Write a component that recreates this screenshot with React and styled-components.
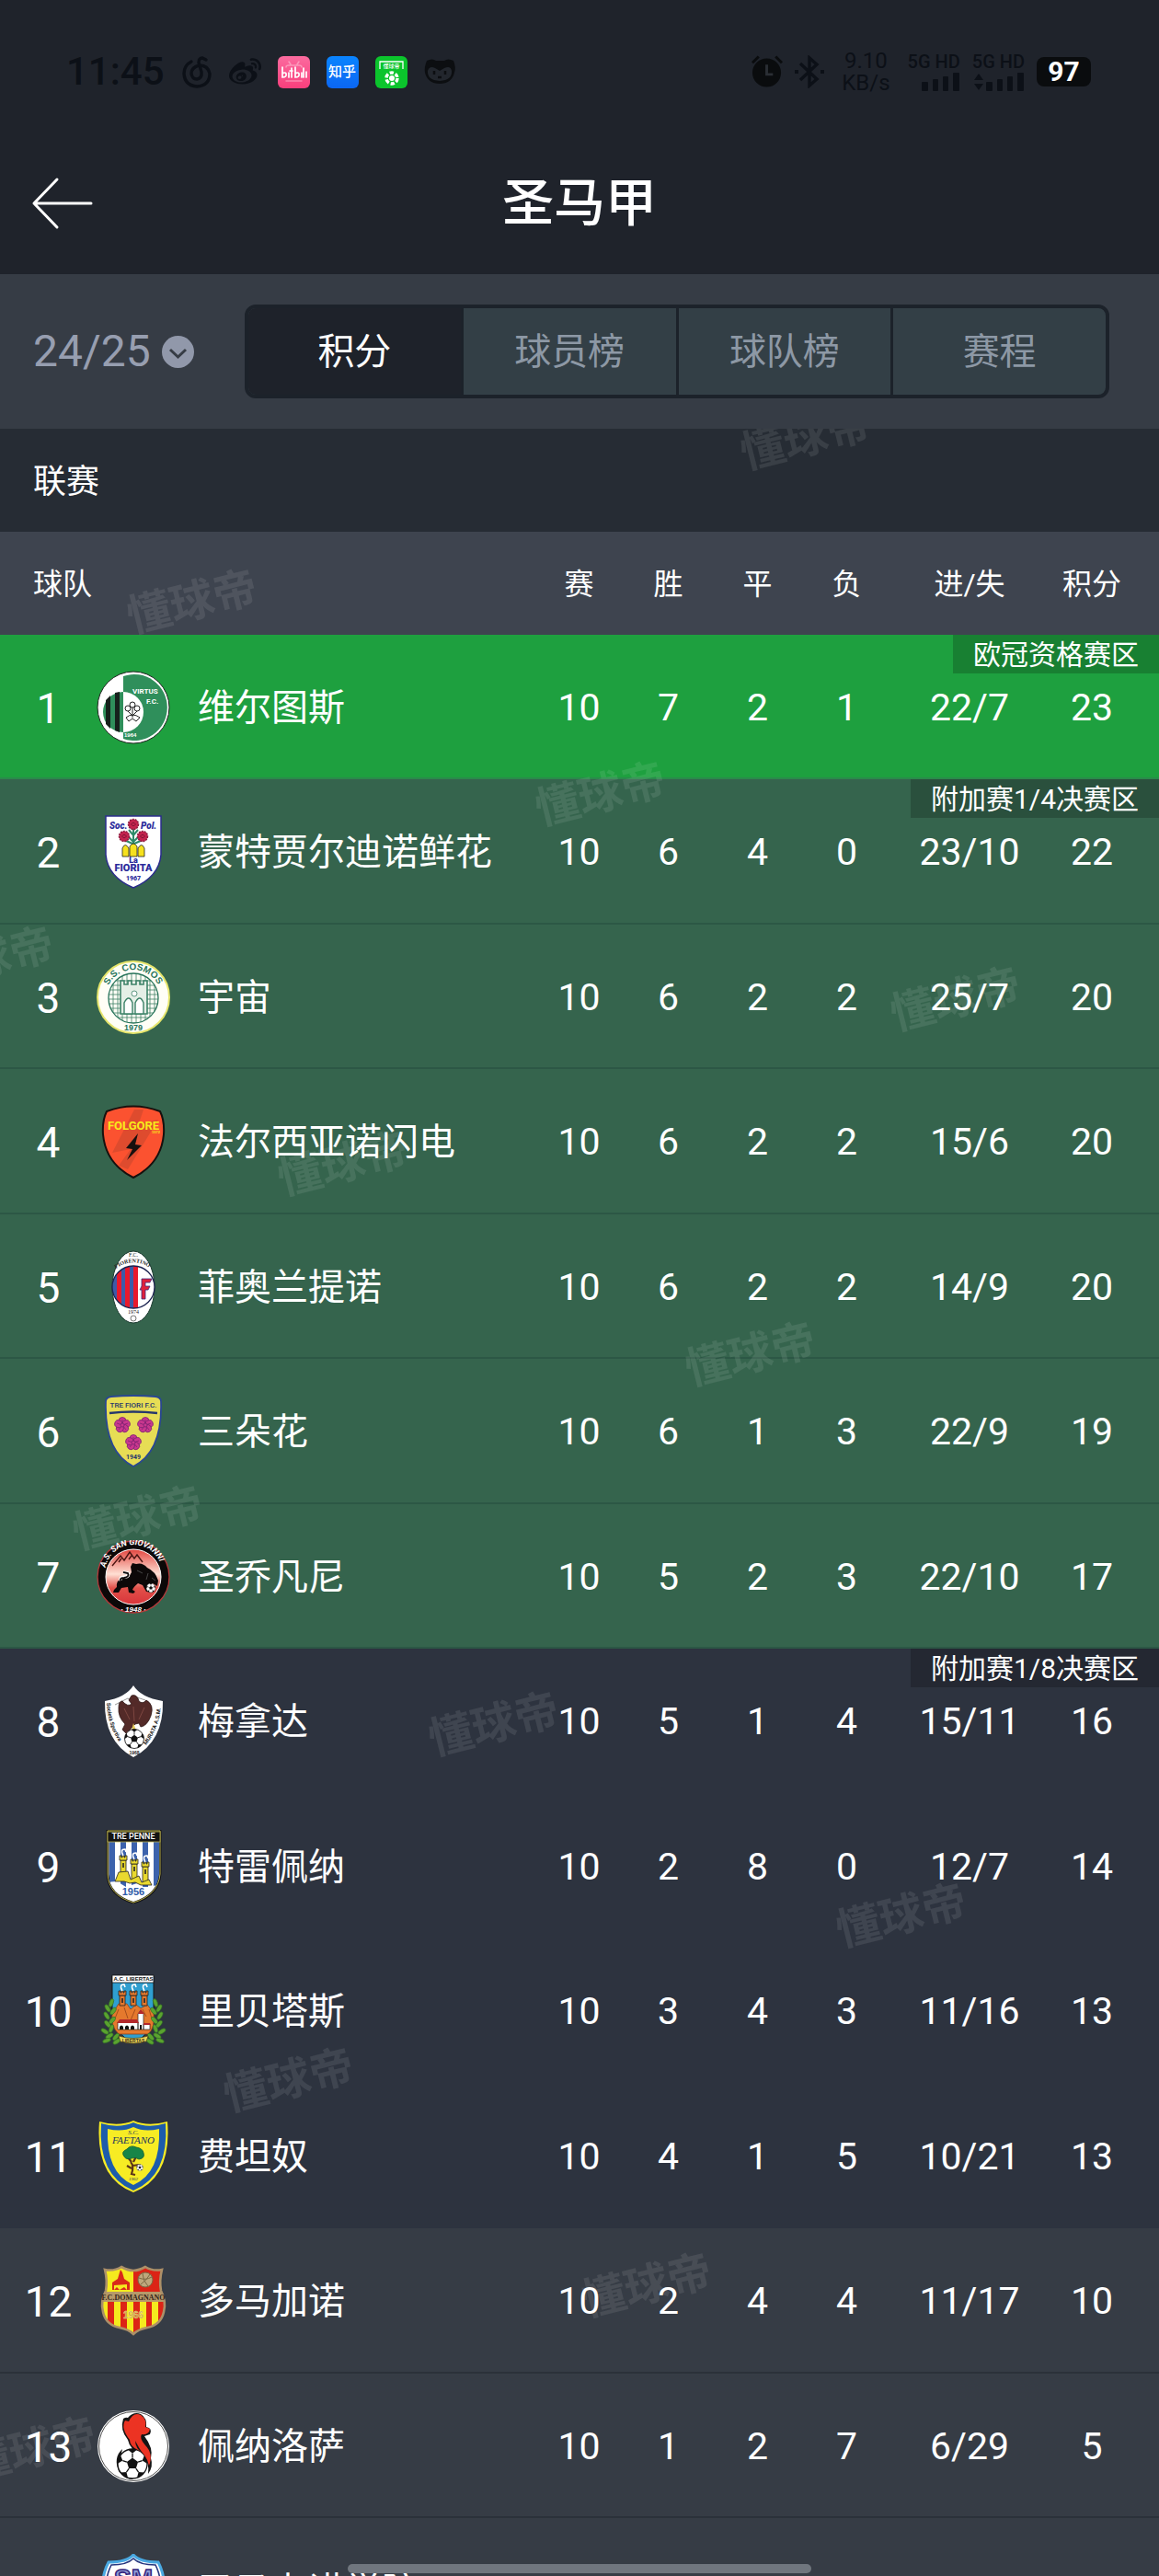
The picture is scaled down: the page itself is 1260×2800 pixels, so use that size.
import { useState } from 'react';
import styled, { createGlobalStyle, css } from 'styled-components';
import { FaWeibo } from 'react-icons/fa';

const GlobalStyle = createGlobalStyle`
  * {
    box-sizing: border-box;
  }
  body {
    margin: 0;
    background: #363c45;
    color: #fff;
    font-family: Roboto, 'Noto Sans CJK SC', sans-serif;
  }
  button, select {
    margin: 0;
    padding: 0;
    border: 0;
    background: none;
    color: inherit;
    font: inherit;
  }
`;

const Screen = styled.div`
  position: relative;
  display: flex;
  flex-direction: column;
  height: 100vh;
  overflow: hidden;
`;

/* status bar */

const StatusBar = styled.div`
  display: flex;
  align-items: center;
  justify-content: space-between;
  height: 144px;
  padding: 12px 74px 0 72px;
  background: #1f232b;
  color: #0c1017;
`;

const StatusGroup = styled.div`
  display: flex;
  align-items: center;
  gap: ${props => props.$gap}px;
`;

const Clock = styled.span`
  font-size: 42px;
  line-height: 48px;
  font-weight: 500;
`;

const AppTile = styled.span`
  display: flex;
  align-items: center;
  justify-content: center;
  width: 35px;
  height: 35px;
  border-radius: 6px;
  background: ${props => props.$bg};
  color: #fff;
  font-size: 15px;
  line-height: 20px;
  font-weight: 500;
`;

const NetSpeed = styled.div`
  display: flex;
  flex-direction: column;
  align-items: center;
  padding: 0 6px;
  font-size: 24px;
  line-height: 24px;
`;

const Signal = styled.div`
  display: flex;
  flex-direction: column;
  align-items: flex-end;
  gap: 2px;
  font-size: 20px;
  line-height: 20px;
  font-weight: 500;
`;

const Battery = styled.span`
  width: 59px;
  height: 32px;
  border-radius: 8px;
  background: #0a0c0e;
  color: #fff;
  font-size: 30px;
  line-height: 32px;
  font-weight: 700;
  text-align: center;
`;

/* title bar and filters */

const TitleBar = styled.header`
  display: grid;
  grid-template-columns: 1fr auto 1fr;
  align-items: center;
  height: 154px;
  padding: 0 34px;
  background: #1f232b;
`;

const BackButton = styled.button`
  display: flex;
  justify-self: start;
`;

const Title = styled.h1`
  margin: 0;
  font-size: 56px;
  line-height: 64px;
  font-weight: 500;
`;

const FilterBar = styled.div`
  display: flex;
  align-items: center;
  height: 168px;
  padding: 0 54px 0 36px;
  background: #363c45;
`;

const Season = styled.label`
  display: flex;
  align-items: center;
  flex: 0 0 230px;
  gap: 12px;
  color: #979eb0;
`;

const SeasonSelect = styled.select`
  appearance: none;
  font-size: 48px;
  line-height: 56px;
`;

const Tabs = styled.nav`
  display: flex;
  flex: 1;
  height: 102px;
  border: 4px solid #1c222a;
  border-radius: 12px;
  overflow: hidden;
  background: #333f46;
`;

const Tab = styled.button`
  flex: 1;
  padding-top: 2px;
  color: #8d98a5;
  font-size: 40px;
  line-height: 48px;

  & + & {
    border-left: 3px solid #1c222a;
  }

  ${props =>
    props.$active &&
    css`
      background: #1e222a;
      color: #fff;
    `}
`;

/* standings */

const Standings = styled.main`
  position: relative;
  flex: 1;
  min-height: 0;
  overflow: hidden;
`;

const SectionTitle = styled.h2`
  display: flex;
  align-items: center;
  height: 112px;
  margin: 0;
  padding: 4px 36px 0;
  background: #262c34;
  font-size: 36px;
  line-height: 48px;
  font-weight: 400;
`;

const Table = styled.table`
  width: 100%;
  border-collapse: collapse;
  table-layout: fixed;
`;

const HeadRow = styled.tr`
  height: 112px;
  background: #3e444f;
`;

const HeadCell = styled.th`
  width: ${props => props.$width};
  padding: ${props => props.$padding || '2px 0 0'};
  font-size: 32px;
  line-height: 40px;
  font-weight: 400;
  text-align: ${props => props.$align || 'center'};
`;

const zones = {
  champions: { bg: '#1ea03f', line: '#2a8a4b' },
  playoff: { bg: '#35644d', line: '#2c5745' },
  qualifier: { bg: '#2d333f', line: '#2d333f' },
  none: { bg: '#363c45', line: '#2b3139' },
};

const TeamRow = styled.tr`
  position: relative;
  height: 157px;
  background: ${props => zones[props.$zone].bg};
  box-shadow: inset 0 -2px ${props => zones[props.$zone].line};

  &:nth-child(even) {
    height: 158px;
  }
`;

const Cell = styled.td`
  padding: ${props => props.$padding || 0};
  font-size: 41px;
  line-height: 48px;
  text-align: center;
`;

const Team = styled.div`
  display: flex;
  align-items: center;
`;

const Rank = styled.span`
  width: 105px;
  padding-top: 2px;
  font-size: 46px;
  line-height: 56px;
  text-align: center;
`;

const TeamName = styled.span`
  margin-left: 30px;
  padding-top: 2px;
  font-size: 40px;
  line-height: 48px;
  white-space: nowrap;
`;

const ZoneBadge = styled.span`
  position: absolute;
  top: 0;
  right: 0;
  height: 42px;
  padding: 0 22px;
  background: rgba(0, 0, 0, 0.2);
  font-size: 30px;
  line-height: 44px;
  white-space: nowrap;
`;

const Watermark = styled.span`
  position: absolute;
  left: ${props => props.$x}px;
  top: ${props => props.$y}px;
  transform: translate(-50%, -50%) rotate(-14deg);
  color: rgba(255, 255, 255, 0.09);
  font-size: 48px;
  line-height: 48px;
  font-weight: 700;
  white-space: nowrap;
  pointer-events: none;
`;

const HomeIndicator = styled.div`
  position: absolute;
  left: 30%;
  right: 30%;
  bottom: 3px;
  height: 10px;
  border-radius: 5px;
  background: #70767e;
`;

const CrestSvg = styled.svg`
  flex: none;
  width: 80px;
  height: 80px;
  font-family: 'Liberation Sans', sans-serif;
  font-weight: 700;
`;

/* club crests, all on an 80 x 80 canvas */

function Ball({ cx, cy, r }) {
  const spokes = [0, 72, 144, 216, 288];
  return (
    <g transform={`translate(${cx} ${cy}) scale(${r / 10})`}>
      <circle r="10" fill="#fff" stroke="#111" strokeWidth="0.8" />
      <path d="M0 -4L3.8 -1.2L2.4 3.2H-2.4L-3.8 -1.2Z" fill="#111" />
      {spokes.map(angle => (
        <g key={angle} transform={`rotate(${angle})`}>
          <path d="M0 -4V-7" stroke="#111" strokeWidth="0.8" />
          <path d="M-3 -9.5L0 -7L3 -9.5Q0 -10.6 -3 -9.5Z" fill="#111" />
        </g>
      ))}
    </g>
  );
}

function Virtus() {
  return (
    <CrestSvg viewBox="0 0 80 80">
      <circle cx="40" cy="40" r="39" fill="#fff" stroke="#222" strokeWidth="1" />
      <path d="M29 6A36 36 0 1 1 29 74Z" fill="#2f8f5b" />
      <path d="M29 23A22 22 0 0 0 29 67Z" fill="#2f8f5b" />
      <path d="M10 32L15 27V63L10 58ZM20 24L25 23V67L20 65Z" fill="#16211c" />
      <path d="M29 23A22 22 0 0 1 29 67Z" fill="#fff" />
      <g fill="none" stroke="#222" strokeWidth="1">
        <circle cx="39" cy="37" r="3" />
        <circle cx="34" cy="41" r="3" />
        <circle cx="44" cy="41" r="3" />
        <path d="M39 40V51M34 44L39 49L44 44M32 51Q39 45 47 51L43 55L39 52L35 55Z" />
      </g>
      <text x="39" y="25" fontSize="8" fill="#fff" fontFamily="Roboto">VIRTUS</text>
      <text x="54" y="36" fontSize="8" fill="#fff" fontFamily="Roboto">F.C.</text>
      <text x="30" y="72" fontSize="6" fill="#fff">1964</text>
    </CrestSvg>
  );
}

function Rose({ x, y }) {
  return (
    <g transform={`translate(${x} ${y})`}>
      <circle r="5.5" fill="#c4234e" stroke="#8e1d40" strokeWidth="1.5" strokeDasharray="2 1" />
      <path d="M-2.5 0Q0 -3.5 2.5 0Q0 3.5 -2.5 0" fill="none" stroke="#7f1636" />
    </g>
  );
}

function Fiorita() {
  return (
    <CrestSvg viewBox="0 0 80 80">
      <path d="M10 1H70V43Q68 67 40 79Q12 67 10 43Z" fill="#fff" stroke="#2b2c8c" strokeWidth="1.5" />
      <path d="M40 14V32M30 27L39 31M50 27L41 31M35 16L40 22L45 16M35 24L40 29L45 24" stroke="#2d8a69" strokeWidth="2" fill="none" />
      <Rose x={40} y={10} />
      <Rose x={30} y={23} />
      <Rose x={50} y={23} />
      <path d="M28 45V36Q31 29 35 36V45ZM36 45V34Q40 28 44 34V45ZM45 45V36Q49 29 52 36V45Z" fill="#f6e11d" stroke="#222" strokeWidth="0.8" />
      <g fill="#2b2c9c" fontFamily="Roboto" fontWeight="900">
        <text x="14" y="15" fontSize="10" fontStyle="italic">Soc.</text>
        <text x="48" y="15" fontSize="10" fontStyle="italic">Pol.</text>
        <text x="40" y="52" fontSize="9" textAnchor="middle">La</text>
        <text x="40" y="61" fontSize="11" textAnchor="middle">FIORITA</text>
        <text x="40" y="71" fontSize="7" textAnchor="middle">1967</text>
      </g>
    </CrestSvg>
  );
}

function Cosmos() {
  return (
    <CrestSvg viewBox="0 0 80 80">
      <circle cx="40" cy="40" r="39" fill="#fffef6" stroke="#e6e56c" strokeWidth="2" />
      <defs>
        <clipPath id="cosmosInner">
          <circle cx="40" cy="41" r="27" />
        </clipPath>
        <path id="cosmosArc" d="M13 27A30 30 0 0 1 70 40" />
      </defs>
      <g clipPath="url(#cosmosInner)" stroke="#3c8268" fill="none" strokeWidth="0.8">
        <path d="M13 22H67M13 27H67M13 32H67M13 37H67M13 42H67M13 47H67M13 52H67M13 57H67M13 62H67" />
        <path d="M18 14V68M23 14V68M28 14V68M33 14V68M38 14V68M43 14V68M48 14V68M53 14V68M58 14V68M63 14V68" />
        <path d="M26 58V22H30V26H34V22H38V26H43V22H47V26H51V22H55V58Z" fill="#e4efe6" strokeWidth="1.6" />
        <path d="M30 58V46Q35 36 39 46V58ZM42 58V46Q47 36 51 46V58Z" fill="#fff" strokeWidth="1.4" />
        <circle cx="41" cy="36" r="3" fill="#fff" />
      </g>
      <circle cx="40" cy="41" r="27" fill="none" stroke="#27745a" strokeWidth="1.3" />
      <text fontSize="10" fill="#27745a">
        <textPath href="#cosmosArc">S.S. COSMOS</textPath>
      </text>
      <text x="40" y="76" fontSize="9" fill="#27745a" textAnchor="middle">1979</text>
    </CrestSvg>
  );
}

function Folgore() {
  return (
    <CrestSvg viewBox="0 0 80 80">
      <path d="M11 7Q40 -4 69 7Q74 17 73 32Q70 64 40 79Q10 64 7 32Q6 17 11 7Z" fill="#fb5230" stroke="#17100e" strokeWidth="2" />
      <path d="M41 5H51L46 20L67 16L34 70L24 66L37 48L17 52Z" fill="#d44a2d" opacity="0.75" />
      <text x="40" y="27" fontSize="13" fill="#f8ea1a" textAnchor="middle" fontFamily="Roboto" fontWeight="700">FOLGORE</text>
      <text x="60" y="31" fontSize="4" fill="#f8ea1a">1972</text>
      <path d="M45 31L32 47L39 48L33 60L49 44L42 43Z" fill="#17100e" />
    </CrestSvg>
  );
}

function Fiorentino() {
  return (
    <CrestSvg viewBox="0 0 80 80">
      <defs>
        <clipPath id="fiorentinoInner">
          <circle cx="40" cy="40" r="23" />
        </clipPath>
        <path id="fiorentinoArc" d="M21 20Q40 6 61 21" />
      </defs>
      <ellipse cx="40" cy="40" rx="23" ry="39" fill="#fff" stroke="#1c3a30" strokeWidth="1" />
      <g clipPath="url(#fiorentinoInner)">
        <rect x="17" y="17" width="46" height="46" fill="#fff" />
        <rect x="17" y="17" width="27" height="46" fill="#3d5aa8" />
        <path d="M22 17H27V63H22ZM31 17H36V63H31ZM40 17H45V63H40Z" fill="#e8192c" />
      </g>
      <circle cx="40" cy="40" r="23" fill="none" stroke="#1b2350" strokeWidth="1.3" />
      <path d="M49 31H60L58 35H53V39H58L56 43H53V53H49V43H47L49 39Z" fill="#e0203a" stroke="#3a2a7c" strokeWidth="0.8" />
      <g fontFamily="Liberation Serif" fill="#222">
        <text x="40" y="7" fontSize="6" fontWeight="400" textAnchor="middle">F.C.</text>
        <text fontSize="6">
          <textPath href="#fiorentinoArc">FIORENTINO</textPath>
        </text>
        <text x="40" y="69" fontSize="6" fontWeight="400" textAnchor="middle">1974</text>
      </g>
      <circle cx="40" cy="74" r="3" fill="none" stroke="#555" strokeWidth="0.8" />
    </CrestSvg>
  );
}

function Flower({ x, y }) {
  const petals = [0, 72, 144, 216, 288];
  return (
    <g transform={`translate(${x} ${y})`} fill="#c9378e" stroke="#7d2372" strokeWidth="0.8">
      {petals.map(angle => (
        <circle key={angle} cy="-4.5" r="4" transform={`rotate(${angle})`} />
      ))}
      <path d="M0 -6V0L6 -2M0 0L4 5M0 0L-4 5M0 0L-6 -2" fill="none" />
      <circle r="2" />
    </g>
  );
}

function TreFiori() {
  return (
    <CrestSvg viewBox="0 0 80 80">
      <path d="M10 7Q10 3 16 2Q40 0 64 2Q70 3 70 7Q72 62 40 78Q8 62 10 7Z" fill="#e7dd55" stroke="#2a4793" strokeWidth="1.8" />
      <text x="40" y="14" fontSize="8" fill="#26376d" textAnchor="middle" fontFamily="Roboto" fontWeight="500">TRE FIORI F.C.</text>
      <path d="M14 20Q40 17 66 20" stroke="#26376d" strokeWidth="2.4" fill="none" />
      <Flower x={28} y={33} />
      <Flower x={53} y={33} />
      <Flower x={40} y={52} />
      <text x="40" y="70" fontSize="7" fill="#26376d" textAnchor="middle" fontFamily="Roboto">1949</text>
    </CrestSvg>
  );
}

function SanGiovanni() {
  return (
    <CrestSvg viewBox="0 0 80 80">
      <defs>
        <linearGradient id="giovanniSky" x1="0" y1="0" x2="0" y2="1">
          <stop offset="0" stopColor="#e2453f" />
          <stop offset="0.45" stopColor="#ffe0d4" />
          <stop offset="0.7" stopColor="#e2514a" />
          <stop offset="1" stopColor="#d8343a" />
        </linearGradient>
        <path id="giovanniArc" d="M9 36A31 31 0 0 1 71 36" />
      </defs>
      <circle cx="40" cy="40" r="39" fill="#0c0808" stroke="#b5383a" strokeWidth="1.3" />
      <circle cx="40" cy="40" r="30" fill="url(#giovanniSky)" stroke="#fff" strokeWidth="1" />
      <path d="M17 28L26 17L30 22L36 13L41 20L44 16L50 24M24 24L27 20M35 21L38 17" stroke="#4c1512" strokeWidth="1.4" fill="none" />
      <path d="M37 29L39 25L43 26Q50 24 55 30Q64 34 67 44L66 50L61 47L58 52L62 54L61 57L54 56L50 49L45 47Q40 51 39 54L42 56L40 58L35 57L34 51L27 52L24 57H18L19 54L22 51Q21 44 27 42L35 40L38 35Z" fill="#0c0808" />
      <path d="M26 44Q25 40 30 40Q36 40 34 36L29 35" stroke="#fff" strokeWidth="3.4" fill="none" />
      <path d="M26 44Q25 41 30 41Q36 40 34 36L29 35" stroke="#0c0808" strokeWidth="1.8" fill="none" />
      <path d="M44 33L50 36M56 36L54 43M60 41L64 44" stroke="#555" strokeWidth="0.8" />
      <Ball cx={59} cy={52} r={5} />
      <text fontSize="9" fill="#fff" fontStyle="italic" fontFamily="Roboto">
        <textPath href="#giovanniArc" startOffset="6">A.S. SAN GIOVANNI</textPath>
      </text>
      <text x="40" y="78" fontSize="8" fill="#fff" fontStyle="italic" textAnchor="middle">· 1948 ·</text>
    </CrestSvg>
  );
}

function Murata() {
  return (
    <CrestSvg viewBox="0 0 80 80">
      <defs>
        <path id="murataLeft" d="M11 20Q12 46 27 66" />
        <path id="murataRight" d="M54 66Q70 44 70 19" />
      </defs>
      <path d="M40 1Q32 14 9 18Q8 62 40 79Q73 62 72 18Q48 14 40 1Z" fill="#fff" />
      <path d="M20 22L34 15L40 18L44 14L53 17" stroke="#555" strokeWidth="0.6" fill="none" />
      <path d="M38 12Q44 10 46 18Q50 22 54 17Q63 22 59 34Q55 45 48 46L46 42L42 43L37 48L33 54L28 49L31 43Q23 35 24 25Q24 18 28 18Q34 25 38 21L35 17Z" fill="#532a28" stroke="#2c1514" strokeWidth="0.8" />
      <path d="M30 26L36 38M52 25L46 38M40 24L41 40" stroke="#7d4640" strokeWidth="1" />
      <path d="M38 50L40 42L43 50" fill="#e4cb58" />
      <Ball cx={41} cy={59} r={10.5} />
      <text fontSize="6" fill="#222" fontFamily="Roboto">
        <textPath href="#murataLeft">Società Sportiva</textPath>
      </text>
      <text fontSize="6" fill="#222" fontFamily="Roboto">
        <textPath href="#murataRight">MURATA A.S.M.</textPath>
      </text>
      <text x="41" y="76" fontSize="5" fill="#222" textAnchor="middle">1968</text>
    </CrestSvg>
  );
}

function Tower({ x, y, height, fill }) {
  return (
    <g transform={`translate(${x} ${y})`} stroke="#222" strokeWidth="0.8" fill={fill}>
      <path d={`M-3 5H3V${height}H-3Z`} />
      <path d="M-4 0H-2V2H-1V0H1V2H2V0H4V5H-4Z" />
      <path d="M0 0Q-4 -7 2 -7L3 -4" fill="none" stroke="#fff" strokeWidth="1.6" />
      <path d="M0 8V13" stroke="#222" strokeWidth="1.6" />
    </g>
  );
}

function TrePenne() {
  return (
    <CrestSvg viewBox="0 0 80 80">
      <defs>
        <clipPath id="penneInner">
          <path d="M13 12H68V48Q66 70 40 78Q14 70 13 48Z" />
        </clipPath>
      </defs>
      <path d="M12 1H69V48Q67 71 40 79Q13 71 12 48Z" fill="#fff" stroke="#151515" strokeWidth="3" />
      <g clipPath="url(#penneInner)">
        <path d="M14 12H20V62H14ZM26 12H32V62H26ZM38 12H44V62H38ZM50 12H56V62H50ZM62 12H68V62H62Z" fill="#3c62ac" />
        <path d="M10 57L22 56L32 62L44 58L54 64L70 58V80H10Z" fill="#fff" />
      </g>
      <Tower x={29} y={28} height={26} fill="#e9d92f" />
      <Tower x={41} y={32} height={24} fill="#e9d92f" />
      <Tower x={53} y={35} height={22} fill="#e9d92f" />
      <path d="M24 46L34 45L37 54L46 50L49 57L57 54L60 60L48 60L42 57L36 58L30 56L20 56Z" fill="#e9d92f" stroke="#222" strokeWidth="0.8" />
      <path d="M12 1H69V48Q67 71 40 79Q13 71 12 48Z" fill="none" stroke="#b9b04c" strokeWidth="1" />
      <rect x="12" y="2" width="57" height="11" fill="#141414" stroke="#b9b04c" strokeWidth="0.8" />
      <text x="40" y="10" fontSize="9" fill="#fff" textAnchor="middle" fontFamily="Roboto" fontWeight="500">TRE PENNE</text>
      <text x="40" y="71" fontSize="11" fill="#2f5ba8" textAnchor="middle">1956</text>
    </CrestSvg>
  );
}

function Leaves({ flip }) {
  const leaves = [[16, 31, 20], [12, 37, -30], [18, 40, 35], [11, 45, -30], [17, 50, 40], [12, 54, -40], [16, 59, 20], [9, 62, -60], [14, 67, 60], [21, 68, 40], [11, 72, 70], [22, 73, 60]];
  return (
    <g transform={flip ? 'translate(80 0) scale(-1 1)' : undefined} fill="#5aa32f" stroke="#2d6b24" strokeWidth="0.6">
      {leaves.map(([x, y, angle]) => (
        <ellipse key={`${x}-${y}`} cx={x} cy={y} rx="2.2" ry="4.6" transform={`rotate(${angle} ${x} ${y})`} />
      ))}
    </g>
  );
}

function Libertas() {
  return (
    <CrestSvg viewBox="0 0 80 80">
      <path d="M17 2H62V45Q60 66 40 74Q20 66 17 45Z" fill="#2f9fd0" stroke="#151515" strokeWidth="1" />
      <path d="M17 43L24 32H33L37 38L43 33L48 37L55 33L62 42Q64 58 56 65H24Q15 56 17 43Z" fill="#e5792d" stroke="#8c431a" strokeWidth="0.8" />
      <path d="M24 38L20 48M30 36L34 48M42 38L37 50M50 38L54 46M57 38L60 48" stroke="#a44e1d" strokeWidth="1" />
      <Tower x={28} y={18} height={16} fill="#e5792d" />
      <Tower x={40} y={18} height={16} fill="#e5792d" />
      <Tower x={52} y={18} height={16} fill="#e5792d" />
      <Leaves />
      <Leaves flip />
      <path d="M23 52H45V60H23ZM45 43L48 39L51 43V60H45ZM51 54H58V60H51Z" fill="#fff" stroke="#222" strokeWidth="0.7" />
      <path d="M25 49H44L46 53H22ZM45 43L48 38L52 43ZM51 53H58L59 55H51Z" fill="#b3282b" />
      <path d="M25 60V57Q27 54 29 57V60ZM31 60V57Q33 54 35 57V60ZM37 60V57Q39 54 41 57V60ZM47 60V55H49V60Z" fill="#111" />
      <path d="M24 67Q40 72 56 67L54 73Q40 77 26 73Z" fill="#ecd65a" stroke="#5b4b16" strokeWidth="0.7" />
      <text x="40" y="74" fontSize="5" fill="#382f14" textAnchor="middle">LIBERTAS</text>
      <rect x="17" y="1" width="45" height="8" fill="#fff" stroke="#151515" strokeWidth="0.8" />
      <text x="40" y="7" fontSize="6" fill="#111" textAnchor="middle">A.C. LIBERTAS</text>
    </CrestSvg>
  );
}

function Faetano() {
  return (
    <CrestSvg viewBox="0 0 80 80">
      <path d="M3 2Q24 8 40 1Q56 8 77 2Q82 63 40 79Q-2 63 3 2Z" fill="#f7ec24" />
      <path d="M5 4Q24 10 40 3Q56 10 75 4Q79 61 40 77Q1 61 5 4Z" fill="#1d5cab" />
      <path d="M12 10Q28 14 40 8Q52 14 68 10Q70 58 40 71Q10 58 12 10Z" fill="#f7ec24" />
      <g fontFamily="Liberation Serif" fontStyle="italic" fontWeight="400" fill="#1a3560" textAnchor="middle">
        <text x="40" y="16" fontSize="7">S.C.</text>
        <text x="40" y="26" fontSize="11">FAETANO</text>
        <text x="40" y="66" fontSize="5">1962</text>
      </g>
      <path d="M37 46Q41 50 38 59L42 60M38 53L33 50M39 50L46 49M38 46L34 41M40 46L43 40" stroke="#5b3418" strokeWidth="2.2" fill="none" />
      <path d="M30 40Q26 35 33 32Q37 27 43 30Q50 31 51 36Q53 42 46 43Q42 40 38 42Q32 44 30 40Z" fill="#178548" stroke="#0e5a36" strokeWidth="0.8" />
      <Ball cx={47} cy={52} r={3.5} />
    </CrestSvg>
  );
}

function Domagnano() {
  return (
    <CrestSvg viewBox="0 0 80 80">
      <defs>
        <clipPath id="domagnanoInner">
          <path d="M9 6Q19 8 27 3Q34 7 40 7Q46 7 53 3Q61 8 71 6Q68 18 70 29Q76 40 73 52Q70 66 55 69Q45 71 40 76Q35 71 25 69Q10 66 7 52Q4 40 10 29Q12 18 9 6Z" />
        </clipPath>
      </defs>
      <g clipPath="url(#domagnanoInner)">
        <rect width="80" height="80" fill="#f5ea1e" />
        <path d="M40 0H80V32H40ZM12 40H19V80H12ZM26 40H33V80H26ZM40 40H47V80H40ZM54 40H60V80H54ZM67 40H80V80H67Z" fill="#dc2416" />
        <rect y="30" width="80" height="11" fill="#b69a6a" />
      </g>
      <path d="M17 28V20L23 16L25 9L26 6L28 9L30 16L36 20V28Z" fill="#d9281a" />
      <path d="M19 28V23L33 22V28L30 25L25 28L22 25Z" fill="#f5ea1e" />
      <circle cx="53" cy="17" r="8" fill="#bfa77c" stroke="#7c6844" strokeWidth="1" />
      <path d="M46 15Q53 18 60 14M50 10Q50 18 56 24M48 22Q55 17 58 11" stroke="#7c6844" strokeWidth="1" fill="none" />
      <path d="M9 6Q19 8 27 3Q34 7 40 7Q46 7 53 3Q61 8 71 6Q68 18 70 29Q76 40 73 52Q70 66 55 69Q45 71 40 76Q35 71 25 69Q10 66 7 52Q4 40 10 29Q12 18 9 6Z" fill="none" stroke="#ad9068" strokeWidth="2.6" />
      <text x="40" y="39" fontSize="8" fill="#33241a" textAnchor="middle" fontFamily="Liberation Serif">F.C.DOMAGNANO</text>
      <text x="40" y="59" fontSize="10" fill="#b58d35" textAnchor="middle" stroke="#fff2a0" strokeWidth="0.4">1966</text>
    </CrestSvg>
  );
}

function Pennarossa() {
  return (
    <CrestSvg viewBox="0 0 80 80">
      <circle cx="40" cy="40" r="39" fill="#fff" />
      <circle cx="40" cy="40" r="37.5" fill="none" stroke="#222" strokeWidth="0.8" />
      <path d="M28 43Q18 52 24 67Q30 76 40 76Q26 66 26 52Z" fill="#151515" />
      <path d="M34 33Q25 22 29 10Q32 8 34 9Q40 2 48 5Q55 9 54 19Q61 20 58 27L52 29Q62 42 59 53Q62 62 56 70Q58 58 50 50Q36 44 34 33Z" fill="#151515" />
      <Ball cx={39} cy={59} r={16} />
      <path d="M36 33Q26 20 31 12L35 13Q40 2 48 6Q55 11 53 19L58 21Q57 28 49 27Q46 31 53 39Q62 48 57 61Q54 48 45 44Q36 40 36 33Z" fill="#ec3323" />
      <path d="M42 34Q42 42 51 49Q46 42 42 34Z" fill="#151515" />
    </CrestSvg>
  );
}

function Academy() {
  return (
    <CrestSvg viewBox="0 0 80 80">
      <path d="M40 1Q33 9 13 9Q4 26 8 45Q14 68 40 79Q66 68 72 45Q76 26 67 9Q47 9 40 1Z" fill="#fff" stroke="#4aa9e2" strokeWidth="3" />
      <path d="M40 5Q33 12 16 12Q8 28 12 44Q17 65 40 75Q63 65 68 44Q72 28 64 12Q47 12 40 5Z" fill="#fff" stroke="#27367f" strokeWidth="1.6" />
      <text x="40" y="36" fontSize="28" fill="#8e9bd4" stroke="#35277e" strokeWidth="1.6" textAnchor="middle">SM</text>
    </CrestSvg>
  );
}

const teams = [
  { name: '维尔图斯', crest: Virtus, stats: ['10', '7', '2', '1', '22/7', '23'], zone: 'champions', badge: '欧冠资格赛区' },
  { name: '蒙特贾尔迪诺鲜花', crest: Fiorita, stats: ['10', '6', '4', '0', '23/10', '22'], zone: 'playoff', badge: '附加赛1/4决赛区' },
  { name: '宇宙', crest: Cosmos, stats: ['10', '6', '2', '2', '25/7', '20'], zone: 'playoff' },
  { name: '法尔西亚诺闪电', crest: Folgore, stats: ['10', '6', '2', '2', '15/6', '20'], zone: 'playoff' },
  { name: '菲奥兰提诺', crest: Fiorentino, stats: ['10', '6', '2', '2', '14/9', '20'], zone: 'playoff' },
  { name: '三朵花', crest: TreFiori, stats: ['10', '6', '1', '3', '22/9', '19'], zone: 'playoff' },
  { name: '圣乔凡尼', crest: SanGiovanni, stats: ['10', '5', '2', '3', '22/10', '17'], zone: 'playoff' },
  { name: '梅拿达', crest: Murata, stats: ['10', '5', '1', '4', '15/11', '16'], zone: 'qualifier', badge: '附加赛1/8决赛区' },
  { name: '特雷佩纳', crest: TrePenne, stats: ['10', '2', '8', '0', '12/7', '14'], zone: 'qualifier' },
  { name: '里贝塔斯', crest: Libertas, stats: ['10', '3', '4', '3', '11/16', '13'], zone: 'qualifier' },
  { name: '费坦奴', crest: Faetano, stats: ['10', '4', '1', '5', '10/21', '13'], zone: 'qualifier' },
  { name: '多马加诺', crest: Domagnano, stats: ['10', '2', '4', '4', '11/17', '10'], zone: 'none' },
  { name: '佩纳洛萨', crest: Pennarossa, stats: ['10', '1', '2', '7', '6/29', '5'], zone: 'none' },
  { name: '圣马力诺学院', crest: Academy, stats: ['10', '1', '1', '8', '8/22', '4'], zone: 'none' },
];

const tabs = ['积分', '球员榜', '球队榜', '赛程'];

const watermarks = [
  [876, 11], [209, 189], [653, 398], [-12, 577], [1039, 621], [373, 800], [816, 1007],
  [150, 1185], [537, 1409], [980, 1617], [314, 1796], [703, 2019], [34, 2197],
];

function SignalBars({ withArrows }) {
  return (
    <svg width="56" height="20" viewBox="0 0 56 20" fill="currentColor" aria-hidden="true">
      {withArrows && <path d="M6 1L11 8H1ZM6 19L11 12H1Z" />}
      <rect x="14" y="10" width="7" height="10" rx="1" />
      <rect x="26" y="7" width="6" height="13" rx="1" />
      <rect x="37" y="4" width="6" height="16" rx="1" />
      <rect x="48" y="0" width="7" height="20" rx="1" />
    </svg>
  );
}

function PhoneStatus() {
  return (
    <StatusBar>
      <StatusGroup $gap={18}>
        <Clock>11:45</Clock>
        <svg width="34" height="35" viewBox="0 0 34 35" fill="none" stroke="currentColor" strokeWidth="3.4" strokeLinecap="round">
          <path d="M11 6Q3 10 3 19Q4 32 17 33Q31 32 31 19Q29 10 20 10Q11 12 11 19Q12 25 17 25Q23 24 22 17L19 7Q19 2 23 2L27 4" />
        </svg>
        <FaWeibo size={35} />
        <AppTile $bg="linear-gradient(#fb6b9f, #f93f7c)">
          <svg width="35" height="35" viewBox="0 0 35 35" fill="none" stroke="#fff" strokeLinecap="round">
            <path d="M12 6L14 9M23 6L21 9M9 12Q9 10 12 10H23Q26 10 26 12M9 27H26" strokeWidth="1.5" opacity="0.35" />
            <path d="M5 12V23Q10 23 9 19Q8 17 5 19M12 18V23M15 13V23M13 16H16M19 12V23Q24 23 23 19Q22 17 19 19M26 18V23M28 13V23M31 17V23" strokeWidth="1.7" />
          </svg>
        </AppTile>
        <AppTile $bg="linear-gradient(#0a84ff, #0b66f2)">知乎</AppTile>
        <AppTile $bg="#0bc42c">
          <svg width="35" height="35" viewBox="0 0 35 35">
            <path d="M5 14V6H30V14" fill="none" stroke="#fff" strokeWidth="1.3" />
            <text x="17.5" y="13" fontSize="6" fill="#fff" textAnchor="middle">懂球帝</text>
            <circle cx="18" cy="24" r="6" fill="none" stroke="#fff" strokeWidth="3.4" strokeDasharray="4.3 2" />
            <circle cx="18" cy="24" r="3" fill="#fff" />
          </svg>
        </AppTile>
        <svg width="35" height="30" viewBox="0 0 35 30" fill="none">
          <path d="M3 3Q9 0 13 3H22Q26 0 32 3Q35 10 33 16Q30 28 17 28Q4 28 1 16Q0 10 3 3Z" fill="#0c0e11" />
          <path d="M4 14Q6 8 12 11L17 14L22 11Q29 8 30 14Q31 24 17 25Q3 24 4 14Z" fill="#22262d" />
          <path d="M11 14V18M23 14V18M15 21H19" stroke="#0c0e11" strokeWidth="2.5" />
        </svg>
      </StatusGroup>
      <StatusGroup $gap={13}>
        <svg width="34" height="36" viewBox="0 0 35 36" fill="none">
          <circle cx="17" cy="19" r="16" fill="#0a0c0e" />
          <path d="M1 8L8 1M27 1L34 8" stroke="#0a0c0e" strokeWidth="3" />
          <path d="M17 10V21H24" stroke="#2a2e34" strokeWidth="3" />
        </svg>
        <svg width="32" height="36" viewBox="0 0 32 36" fill="none" stroke="currentColor" strokeWidth="3.4">
          <path d="M6 9L24 26L16 33V3L24 10L6 27" />
          <path d="M0 18H4M28 18H32" strokeWidth="4" />
        </svg>
        <NetSpeed>
          <span>9.10</span>
          <span>KB/s</span>
        </NetSpeed>
        <Signal>
          5G HD
          <SignalBars />
        </Signal>
        <Signal>
          5G HD
          <SignalBars withArrows />
        </Signal>
        <Battery>97</Battery>
      </StatusGroup>
    </StatusBar>
  );
}

export default function App() {
  const [activeTab, setActiveTab] = useState(tabs[0]);

  return (
    <Screen>
      <GlobalStyle />
      <PhoneStatus />
      <TitleBar>
        <BackButton aria-label="返回">
          <svg width="68" height="60" viewBox="0 0 68 60" fill="none" stroke="#fff" strokeWidth="3" strokeLinecap="round" strokeLinejoin="round">
            <path d="M28 4L3 30L28 56M3 30H65" />
          </svg>
        </BackButton>
        <Title>圣马甲</Title>
      </TitleBar>
      <FilterBar>
        <Season>
          <SeasonSelect aria-label="赛季" defaultValue="24/25">
            <option>24/25</option>
          </SeasonSelect>
          <svg width="35" height="35" viewBox="0 0 35 35" aria-hidden="true">
            <circle cx="17.5" cy="17.5" r="17.5" fill="#9198aa" />
            <path d="M9 15L17.5 23L26 15" fill="none" stroke="#363c45" strokeWidth="3" />
          </svg>
        </Season>
        <Tabs>
          {tabs.map(tab => (
            <Tab key={tab} $active={tab === activeTab} onClick={() => setActiveTab(tab)}>
              {tab}
            </Tab>
          ))}
        </Tabs>
      </FilterBar>
      <Standings>
        <SectionTitle>联赛</SectionTitle>
        <Table>
          <thead>
            <HeadRow>
              <HeadCell $align="left" $padding="2px 0 0 36px">球队</HeadCell>
              <HeadCell $width="97px">赛</HeadCell>
              <HeadCell $width="97px">胜</HeadCell>
              <HeadCell $width="97px">平</HeadCell>
              <HeadCell $width="97px">负</HeadCell>
              <HeadCell $width="170px">进/失</HeadCell>
              <HeadCell $width="121px" $padding="2px 25px 0 0">积分</HeadCell>
            </HeadRow>
          </thead>
          <tbody>
            {teams.map(({ name, crest: Crest, stats, zone, badge }, index) => (
              <TeamRow key={name} $zone={zone}>
                <Cell>
                  <Team>
                    <Rank>{index + 1}</Rank>
                    <Crest />
                    <TeamName>{name}</TeamName>
                  </Team>
                </Cell>
                {stats.slice(0, 5).map((value, column) => (
                  <Cell key={column}>{value}</Cell>
                ))}
                <Cell $padding="0 25px 0 0">
                  {stats[5]}
                  {badge && <ZoneBadge>{badge}</ZoneBadge>}
                </Cell>
              </TeamRow>
            ))}
          </tbody>
        </Table>
        {watermarks.map(([x, y]) => (
          <Watermark key={`${x}-${y}`} $x={x} $y={y} aria-hidden="true">
            懂球帝
          </Watermark>
        ))}
      </Standings>
      <HomeIndicator />
    </Screen>
  );
}
